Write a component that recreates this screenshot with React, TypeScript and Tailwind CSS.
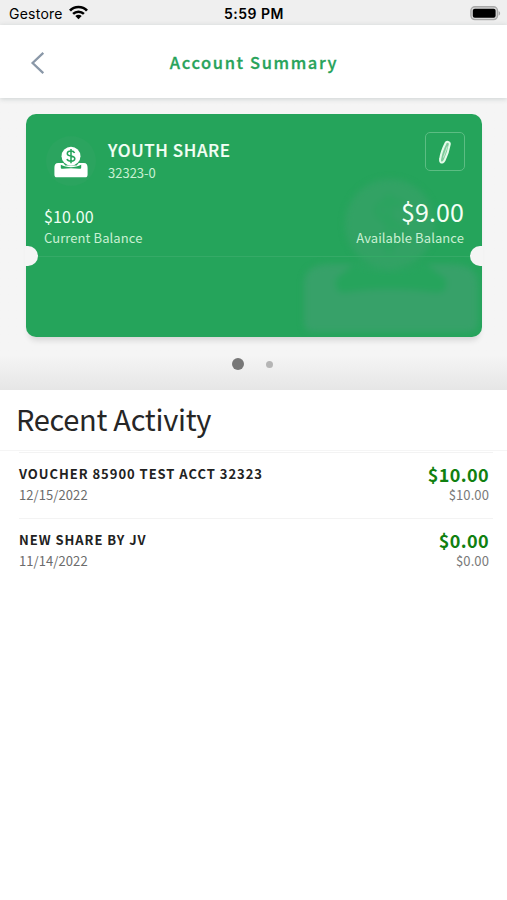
import { ReactNode } from "react";

const activity = [
  {
    title: "VOUCHER 85900 TEST ACCT 32323",
    date: "12/15/2022",
    amount: "$10.00",
    balance: "$10.00",
  },
  {
    title: "NEW SHARE BY JV",
    date: "11/14/2022",
    amount: "$0.00",
    balance: "$0.00",
  },
];

function StatusBar() {
  return (
    <div className="flex h-[25px] items-center justify-between bg-[#efefef] pr-[6px] pl-[9px] pt-[2px] font-['Inter',sans-serif] text-black">
      <div className="flex w-[120px] items-center gap-[6px]">
        <span className="text-[14px] leading-[20px] tracking-[0.25px]">Gestore</span>
        <svg width="19" height="15" viewBox="0 0 19 15" fill="none" className="-mt-[2px]">
          <path d="M1 5.6C5.5 0.8 13.5 0.8 18 5.6" stroke="#000" strokeWidth="2.7" />
          <path d="M4.1 8.9C7 6 12 6 14.9 8.9" stroke="#000" strokeWidth="2.5" />
          <path d="M9.5 14.2L6.3 11.1C8.1 9.4 10.9 9.4 12.7 11.1Z" fill="#000" />
        </svg>
      </div>
      <span className="mr-[2px] text-[14px] leading-[20px] font-semibold tracking-[0.5px]">5:59 PM</span>
      <div className="flex w-[120px] justify-end">
        <svg width="31" height="15" viewBox="0 0 31 15">
          <rect x="0.9" y="0.8" width="26.6" height="12.8" rx="4" fill="#d8d8d8" stroke="#a8a8a8" strokeWidth="1.4" />
          <rect x="2.8" y="2.7" width="22.8" height="9" rx="2" fill="#000" />
          <path d="M28.6 5V9.6C30.6 8.8 30.6 5.8 28.6 5Z" fill="#a8a8a8" />
        </svg>
      </div>
    </div>
  );
}

function Header() {
  return (
    <header className="relative z-10 flex h-[73px] items-center bg-white px-[30px] shadow-[0_1px_5px_rgba(60,80,80,0.22)]">
      <svg width="16" height="24" viewBox="0 0 16 24" fill="none" className="mt-[3px]">
        <path d="M13.3 1.8L2.6 12L13.3 22.2" stroke="#8a98a8" strokeWidth="2.3" />
      </svg>
      <h1 className="mt-px mr-[15px] flex-1 text-center text-[16.5px] leading-[24px] font-medium tracking-[1.6px] text-[#27a35a] [-webkit-text-stroke:0.3px_#27a35a]">
        Account Summary
      </h1>
    </header>
  );
}

function ShareIcon() {
  return (
    <svg width="34" height="32" viewBox="0 0 33 31" className="mt-px -ml-px">
      <path
        d="M4 16.5H9L11 19H22L24 16.5H29C31.6 16.5 32.6 18.4 32.6 21V27.6C32.6 29.6 31.8 30.3 30.2 30.3H2.8C1.2 30.3 0.4 29.6 0.4 27.6V21C0.4 18.4 1.4 16.5 4 16.5Z"
        fill="#fff"
      />
      <path d="M6.6 18.2C12 21.4 21 21.4 26.4 18.2V20.8C26.4 22 25.6 22.2 24.5 22C19.4 21.3 13.6 21.3 8.5 22C7.4 22.2 6.6 22 6.6 20.8Z" fill="#25a45b" />
      <circle cx="16.5" cy="9.8" r="9.2" fill="#fff" />
      <path
        d="M20 6.8C19.4 5.5 18.1 4.9 16.5 4.9C14.5 4.9 12.9 5.8 12.9 7.4C12.9 10.6 20.2 8.8 20.2 12.1C20.2 13.7 18.5 14.7 16.5 14.7C14.6 14.7 13.1 14 12.6 12.5M16.5 2.9V16.7"
        fill="none"
        stroke="#25a45b"
        strokeWidth="1.5"
      />
    </svg>
  );
}

// large faded copy of the share icon behind the balance
function Watermark() {
  return (
    <svg width="184" height="164" viewBox="0 0 184 164" className="absolute right-0 bottom-0 overflow-visible blur-[3px]">
      <path
        d="M34 91H60C78 99 108 99 126 91H150C172 91 180 98 180 112V149C180 156 177 159 170 159H16C10 159 6 156 6 149V112C6 98 14 91 34 91Z"
        fill="#37a169"
      />
      <path d="M56 91C78 101 106 101 128 91L148 106V112C148 119 142 120 134 119C106 115 76 115 50 119C42 120 38 118 38 112V106Z" fill="#26a45c" />
      <circle cx="92" cy="51" r="45" fill="#32a264" />
      <path d="M105 33C96 25 78 28 80 39C82 50 104 48 104 60C104 72 86 75 76 64M91 21V81" fill="none" stroke="#2ba35f" strokeWidth="6" />
    </svg>
  );
}

function Notch({ children }: { children: ReactNode }) {
  return <div className="relative -mt-[2px] -mr-px -ml-px flex h-[20px] items-center justify-between">{children}</div>;
}

function AccountCard() {
  return (
    <div className="relative h-[223px] rounded-[10px] bg-[#25a45b] shadow-[0_6px_6px_-3px_rgba(0,0,0,0.14)]">
      <div className="absolute inset-0 overflow-hidden rounded-[10px]">
        <Watermark />
      </div>
      <div className="relative flex h-[78px] items-start pt-[18px] pr-[18px] pl-[20px]">
        <div className="mt-[4px] flex h-[50px] w-[50px] items-center justify-center rounded-full bg-[#2ba45f]">
          <ShareIcon />
        </div>
        <div className="ml-[12px] flex-1 pt-[6px]">
          <div className="text-[17px] leading-[24px] font-medium tracking-[0.6px] text-[#f3fff5] [-webkit-text-stroke:0.2px_#f3fff5]">
            YOUTH SHARE
          </div>
          <div className="text-[13px] leading-[22px] text-[#c9f0d3]">32323-0</div>
        </div>
        <button className="-mr-px flex h-[39px] w-[40px] items-center justify-center rounded-[5px] border border-[#5cbd83]">
          <svg width="14" height="24" viewBox="0 0 14 24" fill="none" className="-ml-px">
            <path
              d="M7.6 3C8.4 1 12.2 1.8 11.8 4.2C10.9 9.4 8.8 15.8 6.6 20.2C5.6 22.2 4 23 2.9 22.4C1.8 21.8 1.9 20.4 2.2 18.8C3 13.2 5.4 7.4 7.6 3Z"
              fill="#7fcb9b"
              stroke="#e4fbe9"
              strokeWidth="2"
            />
            <path d="M9.3 6.5L5.4 17.5" stroke="#d4f4dc" strokeWidth="0.8" />
          </svg>
        </button>
      </div>
      <div className="relative flex h-[56px] items-end justify-between px-[18px]">
        <div>
          <div className="text-[16px] leading-[23px] tracking-[0.15px] text-[#effff2]">$10.00</div>
          <div className="text-[13px] leading-[20px] tracking-[0.08px] text-[#c9f0d3]">Current Balance</div>
        </div>
        <div className="text-right">
          <div className="text-[25px] leading-[33px] tracking-[0.1px] text-[#f3fff5]">$9.00</div>
          <div className="text-[13px] leading-[20px] tracking-[0.08px] text-[#c9f0d3]">Available Balance</div>
        </div>
      </div>
      <Notch>
        <div className="h-[20px] w-[13px] rounded-r-full bg-[#f5f5f5]" />
        <div className="h-px flex-1 bg-[#35aa67]" />
        <div className="h-[20px] w-[13px] rounded-l-full bg-[#f5f5f5]" />
      </Notch>
    </div>
  );
}

export default function App() {
  return (
    <div className="h-[900px] w-[507px] overflow-hidden bg-white font-['Noto_Sans_CJK_SC',sans-serif]">
      <StatusBar />
      <Header />
      <section className="h-[292px] bg-linear-to-b from-[#f5f5f5] from-88% to-[#e6e6e6] pt-[16px] pr-[25px] pl-[26px]">
        <AccountCard />
        <div className="mt-[21px] flex items-center justify-center gap-[22px] pr-[3px]">
          <span className="h-[12px] w-[12px] rounded-full bg-[#777]" />
          <span className="h-[7px] w-[7px] rounded-full bg-[#b5b5b5]" />
        </div>
      </section>
      <h2 className="h-[61px] border-b border-[#f5f5f5] px-[16px] pt-[7px] text-[29px] leading-[42px] tracking-[-0.3px] text-[#262626]">
        Recent Activity
      </h2>
      <ul className="mt-px pr-[14px] pl-[19px]">
        {activity.map((item) => (
          <li key={item.title} className="flex h-[66px] justify-between border-t border-[#f3f3f3] pt-[10px] pr-[4px]">
            <div>
              <div className="text-[13px] leading-[21px] font-bold tracking-[0.96px] text-[#222]">{item.title}</div>
              <div className="text-[13px] leading-[22px] tracking-[0.08px] text-[#6c6c6c]">{item.date}</div>
            </div>
            <div className="text-right">
              <div className="text-[18px] leading-[22px] font-bold tracking-[0.4px] text-[#108010]">{item.amount}</div>
              <div className="text-[13px] leading-[20px] tracking-[0.1px] text-[#7a7a7a]">{item.balance}</div>
            </div>
          </li>
        ))}
      </ul>
    </div>
  );
}
